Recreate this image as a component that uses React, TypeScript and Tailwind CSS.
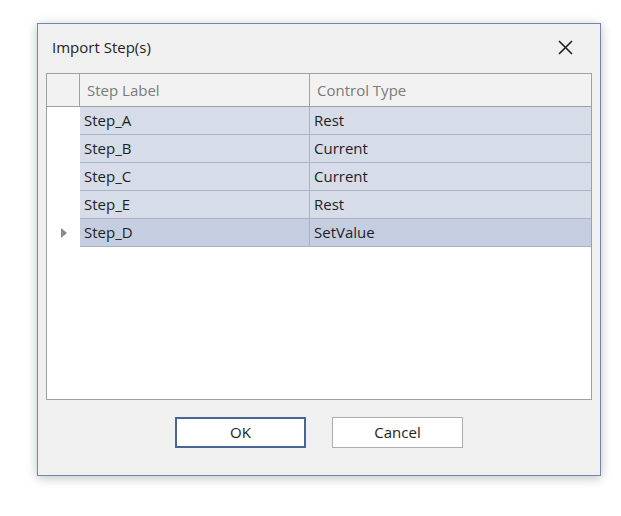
const rows = [
  { label: "Step_A", type: "Rest" },
  { label: "Step_B", type: "Current" },
  { label: "Step_C", type: "Current" },
  { label: "Step_E", type: "Rest" },
  { label: "Step_D", type: "SetValue", current: true },
]

const ImportStepsDialog = () => {
  return (
    <div className="ml-[37px] w-[564px] h-[453px] bg-[#f0f0f0] border border-[#7088ad] shadow-[0_2px_10px_rgba(0,0,0,0.25)] flex flex-col text-[#1e1e1e]">
      <div className="h-[49px] flex items-center justify-between pl-[14px] pr-[27px] pb-[3px]">
        <span className="text-[15px]">Import Step(s)</span>
        <svg width="15" height="15" viewBox="0 0 15 15">
          <path d="M1 1 L14 14 M14 1 L1 14" stroke="#1e1e1e" strokeWidth="1.6" />
        </svg>
      </div>
      <div className="mx-[8px] h-[327px] bg-white border border-[#a0a0a0] flex flex-col">
        <div className="flex h-[33px] bg-[#f2f2f2] border-b border-[#a0a0a0] text-[#7a7a7a] text-[15px]">
          <div className="w-[33px] border-r border-[#a0a0a0]" />
          <div className="w-[230px] border-r border-[#a0a0a0] flex items-center pl-[7px]">Step Label</div>
          <div className="flex-1 flex items-center pl-[7px]">Control Type</div>
        </div>
        {rows.map((r) => (
          <div key={r.label} className="flex h-[28px] text-[15px]">
            <div className="w-[33px] bg-white flex items-center justify-center">
              {r.current && (
                <svg width="6" height="10" viewBox="0 0 6 10">
                  <path d="M0 0 L6 5 L0 10 Z" fill="#8a8a8a" />
                </svg>
              )}
            </div>
            <div className={`flex-1 flex border-b border-[#aab3c4] ${r.current ? "bg-[#c5cee0]" : "bg-[#d6dde9]"}`}>
              <div className="w-[230px] border-r border-[#aab3c4] flex items-center pl-[4px] pb-[1px]">{r.label}</div>
              <div className="flex-1 flex items-center pl-[4px] pb-[1px]">{r.type}</div>
            </div>
          </div>
        ))}
      </div>
      <div className="flex justify-center gap-[26px] mt-[17px]">
        <button className="w-[131px] h-[31px] bg-white border-2 border-[#4a6595] text-[15px]">OK</button>
        <button className="w-[131px] h-[31px] bg-white border border-[#adadad] text-[15px]">Cancel</button>
      </div>
    </div>
  )
}

export default function App() {
  return (
    <div className="w-[621px] h-[516px] bg-white pt-[23px] font-['Open_Sans','Noto_Sans',sans-serif]">
      <ImportStepsDialog />
    </div>
  )
}
